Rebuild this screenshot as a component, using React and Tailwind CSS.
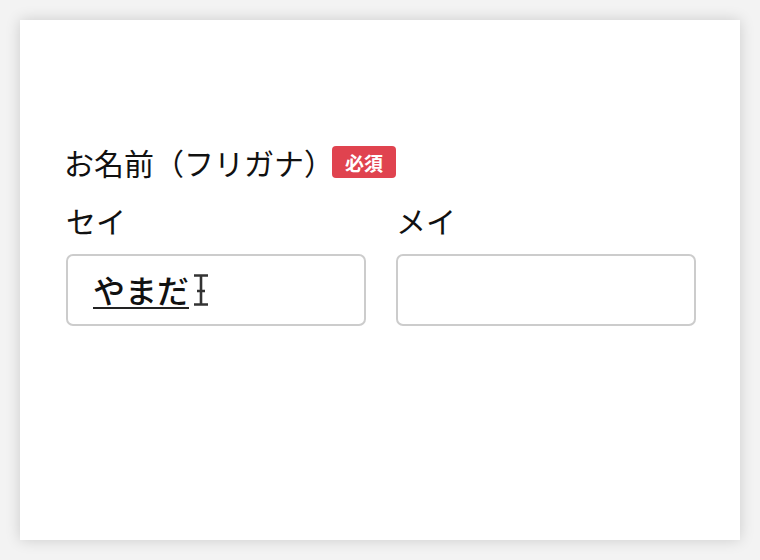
import React from "react";

export default function App() {
  const jp = { fontFamily: '"Noto Sans CJK JP", "Noto Sans", sans-serif' };
  return (
    <div className="w-[760px] h-[560px] bg-[#f3f3f3] p-[20px]" style={jp}>
      <div className="w-[720px] h-[520px] bg-white shadow-[0_0_14px_rgba(0,0,0,0.16)] pt-[124px] pl-[46px] pr-[44px]">
        <div className="flex items-center h-[36px]">
          <span className="text-[30px] leading-[36px] text-[#111] ml-[-2px] whitespace-nowrap">お名前（フリガナ）</span>
          <span className="ml-[-2px] w-[64px] h-[32px] rounded-[4px] bg-[#e0434f] text-white text-[19px] font-bold flex items-center justify-center leading-none">必須</span>
        </div>
        <div className="grid grid-cols-2 gap-[30px] mt-[22px]">
          <div className="flex flex-col">
            <div className="h-[36px] text-[30px] leading-[36px] text-[#111]">セイ</div>
            <div className="mt-[16px] h-[72px] border-2 border-[#cccccc] rounded-[7px] flex items-center pl-[25px]">
              <span className="text-[32px] font-medium leading-[34px] text-[#111] border-b-2 border-[#222] pb-[1px]">やまだ</span>
              <svg width="18" height="32" viewBox="0 0 18 32" className="ml-[3px] mt-[-1px] shrink-0">
                <path d="M2 1.5 H16 M2 30.5 H16 M9 1.5 V30.5 M5 17 H13" stroke="#333" strokeWidth="2.6" fill="none" />
              </svg>
            </div>
          </div>
          <div className="flex flex-col">
            <div className="h-[36px] text-[30px] leading-[36px] text-[#111]">メイ</div>
            <div className="mt-[16px] h-[72px] border-2 border-[#cccccc] rounded-[7px]"></div>
          </div>
        </div>
      </div>
    </div>
  );
}
